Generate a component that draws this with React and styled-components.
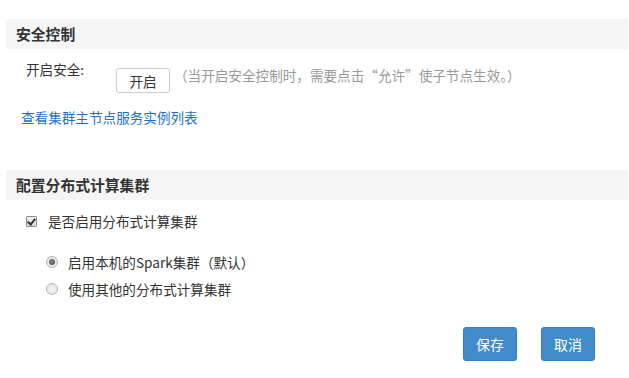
import React from 'react';
import styled, { createGlobalStyle } from 'styled-components';

const GlobalStyle = createGlobalStyle`
    html, body {
        margin: 0;
        padding: 0;
        background: #fff;
    }
    body {
        font-family: "Noto Sans CJK SC", "Open Sans", sans-serif;
        font-size: 13.6px;
        color: #333;
    }
`;

const Page = styled.div`
    width: 629px;
    height: 378px;
    box-sizing: border-box;
    padding: 19px 1px 0 6px;
    overflow: hidden;
`;

const SectionTitle = styled.div`
    height: 30px;
    line-height: 30px;
    padding-left: 10px;
    background: #f5f5f5;
    font-size: 14.8px;
    font-weight: bold;
    color: #333;
    margin-top: ${(p) => p.$top || 0}px;
`;

const FormRow = styled.div`
    display: flex;
    align-items: center;
    padding-left: ${(p) => p.$indent || 0}px;
    margin-top: ${(p) => p.$top || 0}px;
    height: ${(p) => p.$height || 20}px;
`;

const Label = styled.span`
    width: 90px;
    align-self: flex-start;
    line-height: 18px;
    margin-top: -8px;
`;

const ToggleButton = styled.button`
    width: 54px;
    height: 25px;
    box-sizing: border-box;
    border: 1px solid #ccc;
    border-radius: 3px;
    background: #fff;
    font-family: inherit;
    font-size: 13.6px;
    color: #333;
    padding: 0;
    cursor: pointer;
`;

const Hint = styled.span`
    color: #999;
    margin-left: 4px;
    align-self: flex-start;
    line-height: 18px;
    margin-top: -2px;
`;

const Link = styled.a`
    color: #1f6fcd;
    text-decoration: none;
    cursor: pointer;
`;

const CheckBox = styled.input.attrs({ type: 'checkbox' })`
    appearance: none;
    position: relative;
    width: 11px;
    height: 11px;
    box-sizing: border-box;
    margin: 0 11px 0 5px;
    border: 1px solid #8f8f8f;
    border-radius: 1px;
    background: linear-gradient(#f0f0f0, #dcdcdc);

    &:checked::after {
        content: '';
        position: absolute;
        left: 2px;
        top: 0px;
        width: 3px;
        height: 6px;
        border: solid #333;
        border-width: 0 2px 2px 0;
        transform: rotate(40deg);
    }
`;

const Radio = styled.input.attrs({ type: 'radio' })`
    appearance: none;
    position: relative;
    width: 12px;
    height: 12px;
    box-sizing: border-box;
    margin: 0 10px 0 0;
    border: 1px solid #b5b5b5;
    border-radius: 50%;
    background: radial-gradient(circle, #f4f4f4, #e2e2e2);

    &:checked::after {
        content: '';
        position: absolute;
        left: 2px;
        top: 2px;
        width: 6px;
        height: 6px;
        border-radius: 50%;
        background: radial-gradient(circle at 40% 40%, #888, #444);
    }
`;

const Actions = styled.div`
    display: flex;
    justify-content: flex-end;
    gap: 24px;
    margin-top: 28px;
    padding-right: 33px;
`;

const PrimaryButton = styled.button`
    width: 54px;
    height: 34px;
    box-sizing: border-box;
    border: 1px solid #357ebd;
    border-radius: 3px;
    background: #428bca;
    color: #fff;
    font-family: inherit;
    font-size: 14px;
    padding: 0;
    cursor: pointer;
`;

export default function App() {
    return (
        <Page>
            <GlobalStyle />
            <SectionTitle>安全控制</SectionTitle>
            <FormRow $indent={20} $top={19} $height={25}>
                <Label>开启安全:</Label>
                <ToggleButton>开启</ToggleButton>
                <Hint>（当开启安全控制时，需要点击“允许”使子节点生效。）</Hint>
            </FormRow>
            <FormRow $indent={15} $top={14}>
                <Link>查看集群主节点服务实例列表</Link>
            </FormRow>

            <SectionTitle $top={43}>配置分布式计算集群</SectionTitle>
            <FormRow $indent={15} $top={11}>
                <CheckBox defaultChecked />
                <span>是否启用分布式计算集群</span>
            </FormRow>
            <FormRow $indent={40} $top={21}>
                <Radio name="cluster" defaultChecked />
                <span>启用本机的Spark集群（默认）</span>
            </FormRow>
            <FormRow $indent={40} $top={7}>
                <Radio name="cluster" />
                <span>使用其他的分布式计算集群</span>
            </FormRow>

            <Actions>
                <PrimaryButton>保存</PrimaryButton>
                <PrimaryButton>取消</PrimaryButton>
            </Actions>
        </Page>
    );
}
